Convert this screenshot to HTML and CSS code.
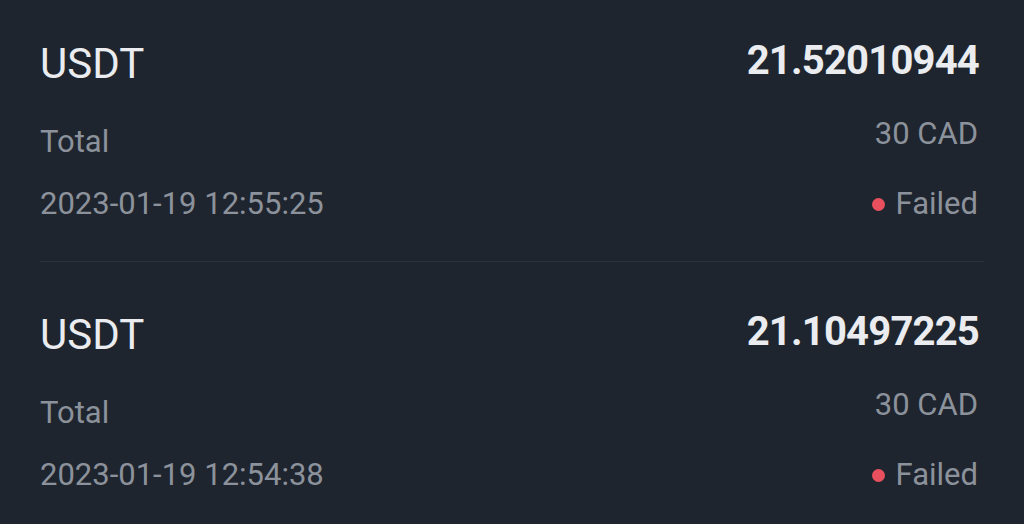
FILE: index.html
```html
<!DOCTYPE html>
<html>
<head>
<meta charset="utf-8">
<link rel="stylesheet" href="styles.css">
</head>
<body>
<div class="list">
  <div class="row">
    <div class="col left">
      <div class="coin">USDT</div>
      <div class="label">Total</div>
      <div class="date">2023-01-19 12:55:25</div>
    </div>
    <div class="col right">
      <div class="amount">21.52010944</div>
      <div class="fiat">30 CAD</div>
      <div class="status"><span class="dot"></span>Failed</div>
    </div>
  </div>
  <div class="row">
    <div class="col left">
      <div class="coin">USDT</div>
      <div class="label">Total</div>
      <div class="date">2023-01-19 12:54:38</div>
    </div>
    <div class="col right">
      <div class="amount">21.10497225</div>
      <div class="fiat">30 CAD</div>
      <div class="status"><span class="dot"></span>Failed</div>
    </div>
  </div>
</div>
</body>
</html>
```

FILE: styles.css
```css
html, body {
  margin: 0;
  padding: 0;
  background: #1f252e;
  width: 1024px;
  height: 524px;
  overflow: hidden;
  font-family: Roboto, "Liberation Sans", sans-serif;
}
.list {
  padding: 0 40px 0 40px;
}
.row {
  display: flex;
  justify-content: space-between;
  padding: 35px 6px 37px 0;
  border-bottom: 1px solid #2c323b;
}
.row + .row {
  padding-top: 44px;
  border-bottom: none;
}
.col {
  display: flex;
  flex-direction: column;
}
.right {
  align-items: flex-end;
}
.coin {
  margin-top: 4px;
  font-size: 42px;
  line-height: 50px;
  color: #eaecef;
}
.label {
  margin-top: 33px;
  font-size: 31px;
  line-height: 40px;
  color: #8c929b;
}
.date {
  margin-top: 22px;
  font-size: 31px;
  line-height: 40px;
  color: #8c929b;
}
.amount {
  margin-top: 2px;
  font-size: 40px;
  line-height: 48px;
  font-weight: 700;
  letter-spacing: -0.8px;
  margin-right: -1px;
  color: #eaecef;
}
.fiat {
  margin-top: 29px;
  font-size: 31px;
  line-height: 40px;
  color: #8c929b;
}
.status {
  margin-top: 30px;
  font-size: 31px;
  line-height: 40px;
  color: #8c929b;
  display: flex;
  align-items: center;
}
.dot {
  width: 13px;
  height: 13px;
  border-radius: 50%;
  background: #e8505d;
  margin-right: 11px;
}
```
